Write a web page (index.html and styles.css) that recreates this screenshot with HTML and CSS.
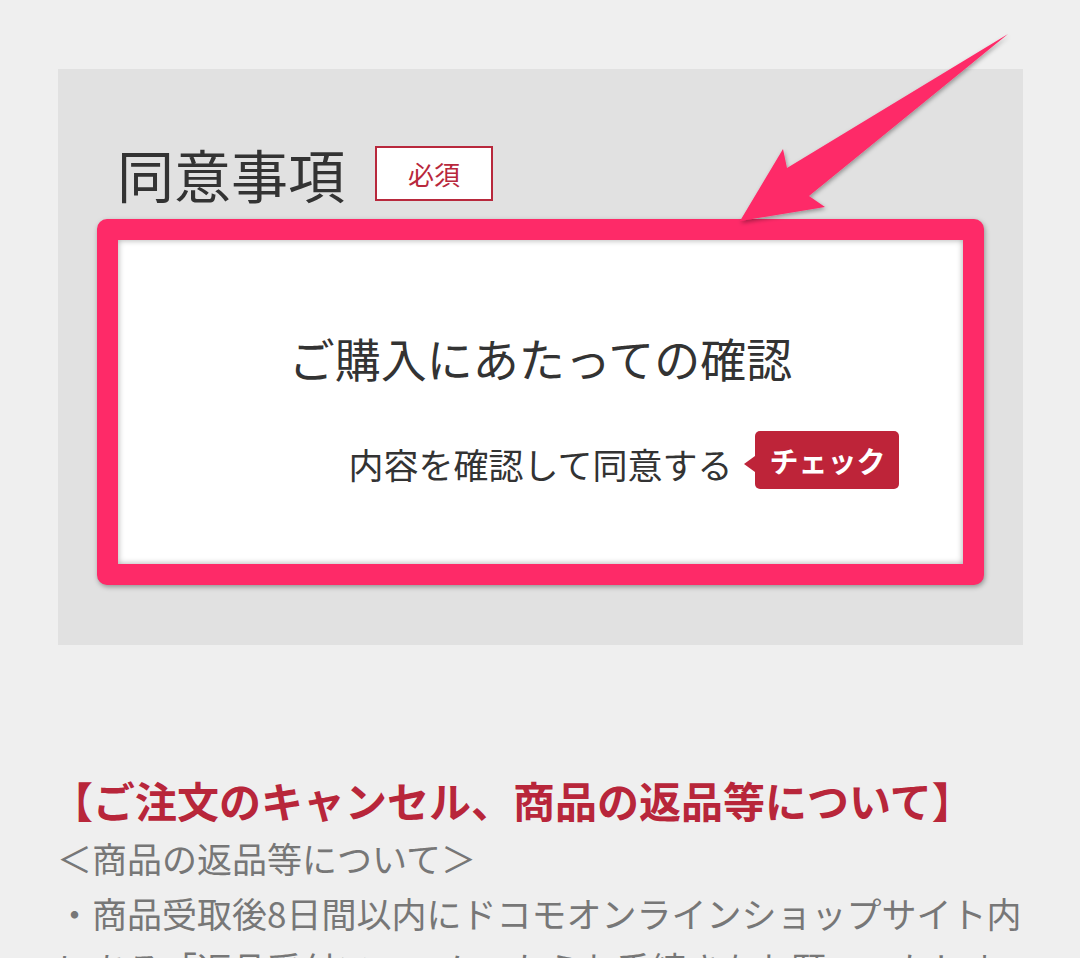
FILE: index.html
```html
<!DOCTYPE html>
<html lang="ja">
<head>
<meta charset="utf-8">
<title>同意事項</title>
<link rel="stylesheet" href="styles.css">
</head>
<body>
<section class="panel">
  <div class="title-row">
    <h2 class="title">同意事項</h2>
    <span class="badge">必須</span>
  </div>
  <div class="frame">
    <h3 class="confirm-heading">ご購入にあたっての確認</h3>
    <div class="agree-row">
      <span class="agree-text">内容を確認して同意する<span class="check-btn">チェック</span></span>
    </div>
  </div>
</section>
<section class="notes">
  <h3 class="notes-heading">【ご注文のキャンセル、商品の返品等について】</h3>
  <p class="notes-text">＜商品の返品等について＞<br>・商品受取後8日間以内にドコモオンラインショップサイト内にある「返品受付フォーム」からお手続きをお願いいたします。</p>
</section>
<svg class="arrow" width="1080" height="958" viewBox="0 0 1080 958" aria-hidden="true">
  <defs>
    <filter id="sh" x="-20%" y="-20%" width="140%" height="140%">
      <feDropShadow dx="1" dy="2" stdDeviation="2" flood-color="#000" flood-opacity="0.35"/>
    </filter>
  </defs>
  <polygon points="740,221 783,149 787,168 1008,34 809,196 825,207" fill="#fe2a68" filter="url(#sh)"/>
</svg>
</body>
</html>
```
FILE: styles.css
```css
html, body {
  margin: 0;
  padding: 0;
}
body {
  background: #efefef;
  font-family: "Noto Sans CJK JP", "Noto Sans", sans-serif;
  width: 1080px;
  height: 958px;
  overflow: hidden;
  position: relative;
}
.panel {
  margin: 69px 0 0 58px;
  width: 965px;
  box-sizing: border-box;
  background: #e1e1e1;
  padding: 76px 39px 60px;
}
.title-row {
  display: flex;
  align-items: center;
  height: 56px;
  margin: 0 0 18px 20px;
}
.title {
  margin: 0;
  font-size: 57px;
  line-height: 56px;
  font-weight: 400;
  color: #333;
}
.badge {
  margin-left: 30px;
  width: 118px;
  height: 55px;
  box-sizing: border-box;
  border: 2px solid #b8283c;
  background: #fff;
  color: #b8283c;
  font-size: 26px;
  display: flex;
  align-items: center;
  justify-content: center;
}
.frame {
  height: 366px;
  box-sizing: border-box;
  border: 21px solid #fe2a68;
  border-radius: 10px;
  background: #fff;
  box-shadow: 1px 2px 5px rgba(0,0,0,0.35), inset 0 0 6px rgba(0,0,0,0.35);
  padding-top: 94px;
  text-align: center;
}
.confirm-heading {
  margin: 0;
  font-size: 46px;
  line-height: 46px;
  font-weight: 400;
  color: #333;
}
.agree-row {
  margin-top: 51px;
  height: 58px;
  text-align: center;
}
.agree-text {
  position: relative;
  display: inline-block;
  padding-top: 8px;
  font-size: 35px;
  line-height: 50px;
  color: #333;
}
.check-btn {
  position: absolute;
  left: calc(100% + 23px);
  top: 0;
  width: 144px;
  height: 58px;
  border-radius: 5px;
  background: #be2439;
  color: #fff;
  font-size: 29px;
  font-weight: 700;
  line-height: 58px;
  text-align: center;
}
.check-btn::before {
  content: "";
  position: absolute;
  left: -11px;
  top: 25px;
  border-right: 11px solid #be2439;
  border-top: 8px solid transparent;
  border-bottom: 8px solid transparent;
}
.notes {
  margin: 127px 0 0 60px;
  width: 990px;
}
.notes-heading {
  margin: 0 0 0 -9px;
  font-size: 42px;
  line-height: 56px;
  font-weight: 700;
  color: #b8263a;
}
.notes-text {
  margin: 2px 0 0 -3px;
  font-size: 35px;
  line-height: 55px;
  color: #777;
}
.arrow {
  position: absolute;
  left: 0;
  top: 0;
  pointer-events: none;
}
```
